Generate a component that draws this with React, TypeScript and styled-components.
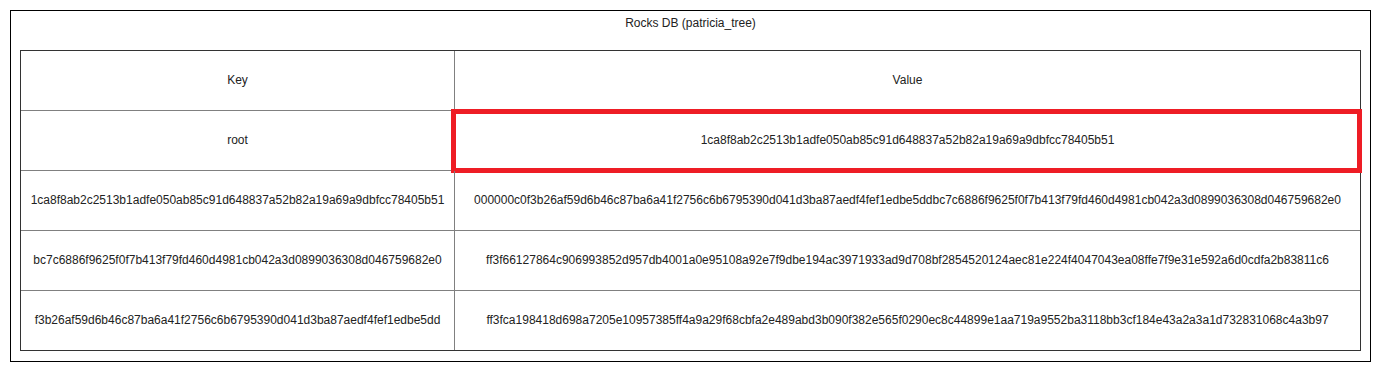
import React from "react";
import styled, { createGlobalStyle } from "styled-components";

const GlobalStyle = createGlobalStyle`
  html, body { margin: 0; padding: 0; background: #ffffff; }
  body { font-family: "Liberation Sans", Arial, sans-serif; }
  * { box-sizing: border-box; }
`;

const Frame = styled.div`
  margin: 10px 0 0 10px;
  width: 1361px;
  border: 1px solid #000000;
  padding: 0 9px 10px 9px;
  background: #ffffff;
`;

const Title = styled.div`
  height: 39px;
  padding-top: 5px;
  text-align: center;
  font-size: 12px;
  color: #222222;
`;

const Table = styled.div`
  border: 1px solid #333333;
  display: flex;
  flex-direction: column;
`;

const Row = styled.div<{ $last?: boolean }>`
  display: grid;
  grid-template-columns: 434px 1fr;
  height: ${(p) => (p.$last ? "59px" : "60px")};
  border-bottom: ${(p) => (p.$last ? "none" : "1px solid #808080")};
`;

const Cell = styled.div<{ $key?: boolean }>`
  position: relative;
  display: flex;
  align-items: center;
  justify-content: center;
  padding-bottom: 2px;
  font-size: 12px;
  color: #222222;
  white-space: nowrap;
  border-right: ${(p) => (p.$key ? "1px solid #808080" : "none")};
`;

const Highlight = styled.div`
  position: absolute;
  left: -4px;
  right: -2px;
  top: -2px;
  bottom: -3px;
  border: 5px solid #ee1d25;
  pointer-events: none;
`;

const rows: { k: string; v: string; hl?: boolean }[] = [
  { k: "Key", v: "Value" },
  {
    k: "root",
    v: "1ca8f8ab2c2513b1adfe050ab85c91d648837a52b82a19a69a9dbfcc78405b51",
    hl: true,
  },
  {
    k: "1ca8f8ab2c2513b1adfe050ab85c91d648837a52b82a19a69a9dbfcc78405b51",
    v: "000000c0f3b26af59d6b46c87ba6a41f2756c6b6795390d041d3ba87aedf4fef1edbe5ddbc7c6886f9625f0f7b413f79fd460d4981cb042a3d0899036308d046759682e0",
  },
  {
    k: "bc7c6886f9625f0f7b413f79fd460d4981cb042a3d0899036308d046759682e0",
    v: "ff3f66127864c906993852d957db4001a0e95108a92e7f9dbe194ac3971933ad9d708bf2854520124aec81e224f4047043ea08ffe7f9e31e592a6d0cdfa2b83811c6",
  },
  {
    k: "f3b26af59d6b46c87ba6a41f2756c6b6795390d041d3ba87aedf4fef1edbe5dd",
    v: "ff3fca198418d698a7205e10957385ff4a9a29f68cbfa2e489abd3b090f382e565f0290ec8c44899e1aa719a9552ba3118bb3cf184e43a2a3a1d732831068c4a3b97",
  },
];

export default function App() {
  return (
    <>
      <GlobalStyle />
      <Frame>
        <Title>Rocks DB (patricia_tree)</Title>
        <Table>
          {rows.map((r, i) => (
            <Row key={i} $last={i === rows.length - 1}>
              <Cell $key>{r.k}</Cell>
              <Cell>
                {r.v}
                {r.hl && <Highlight />}
              </Cell>
            </Row>
          ))}
        </Table>
      </Frame>
    </>
  );
}
